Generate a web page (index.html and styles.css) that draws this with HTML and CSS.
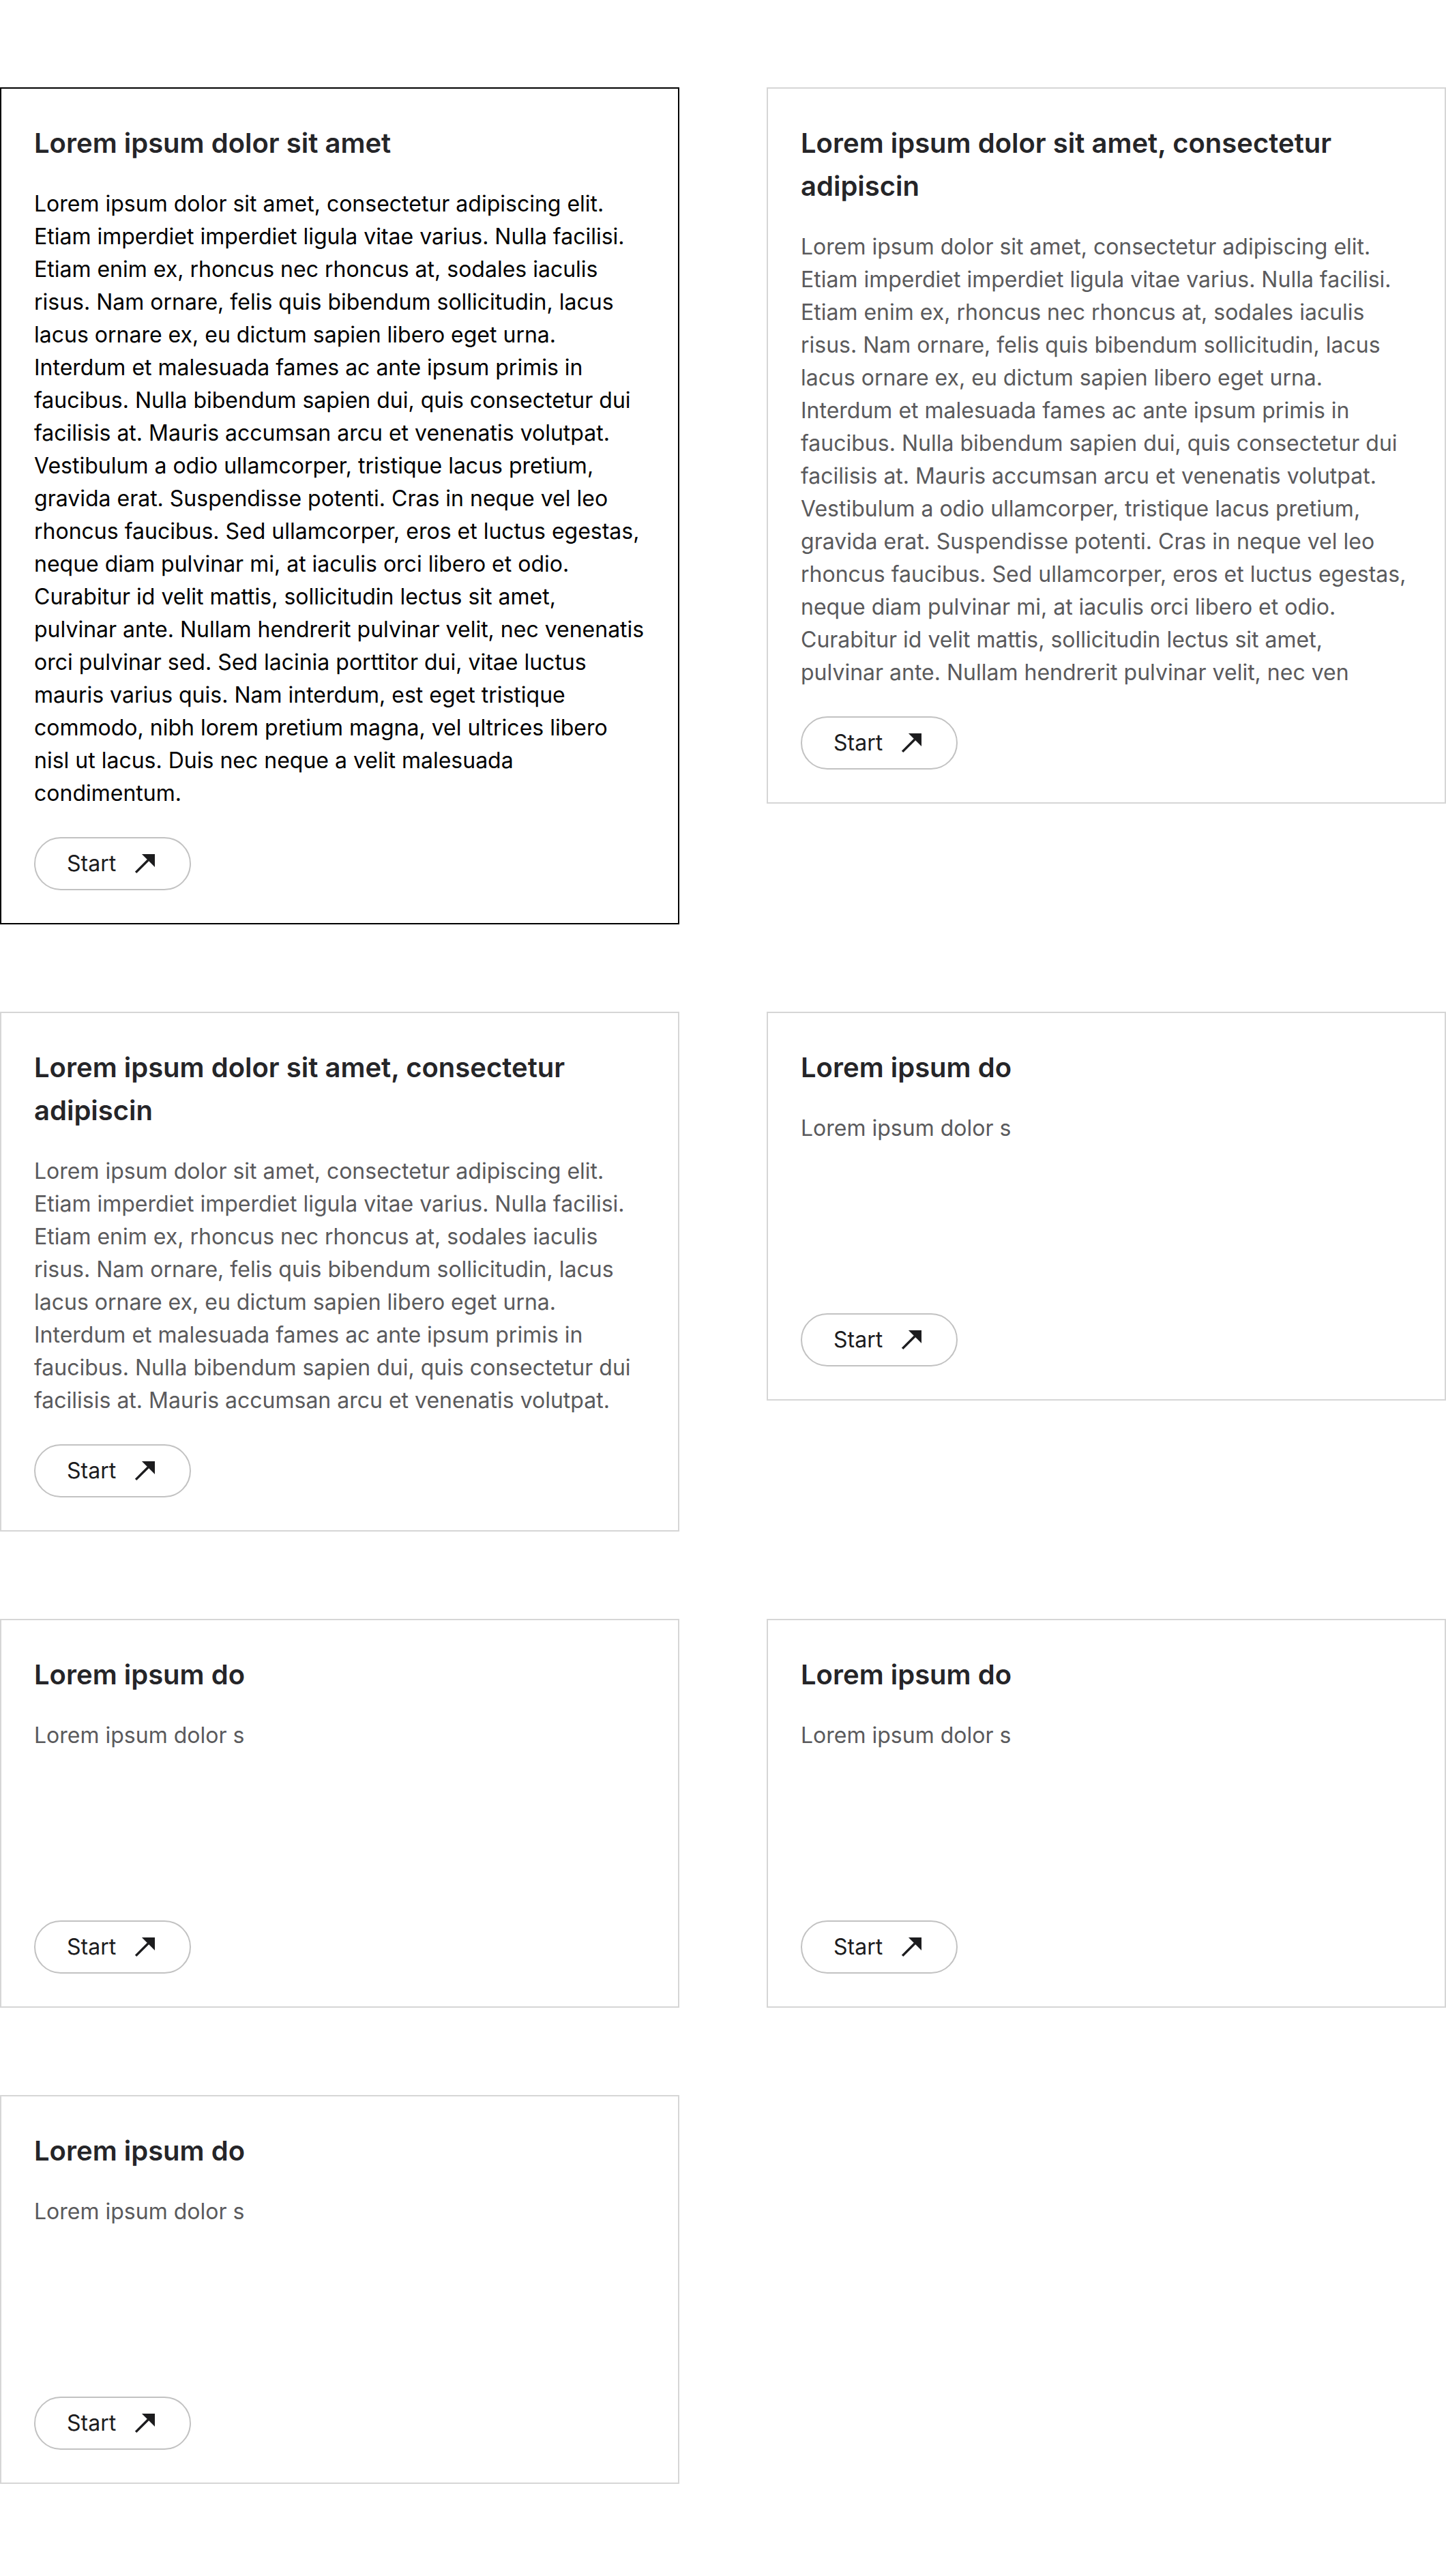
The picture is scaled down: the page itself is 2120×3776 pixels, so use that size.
FILE: index.html
```html
<!DOCTYPE html>
<html lang="en">
<head>
<meta charset="utf-8">
<title>Cards</title>
<link rel="stylesheet" href="styles.css">
</head>
<body>
<main class="grid">
  <article class="card card--active">
    <h2 class="card-title">Lorem ipsum dolor sit amet</h2>
    <p class="card-text">Lorem ipsum dolor sit amet, consectetur adipiscing elit. Etiam imperdiet imperdiet ligula vitae varius. Nulla facilisi. Etiam enim ex, rhoncus nec rhoncus at, sodales iaculis risus. Nam ornare, felis quis bibendum sollicitudin, lacus lacus ornare ex, eu dictum sapien libero eget urna. Interdum et malesuada fames ac ante ipsum primis in faucibus. Nulla bibendum sapien dui, quis consectetur dui facilisis at. Mauris accumsan arcu et venenatis volutpat. Vestibulum a odio ullamcorper, tristique lacus pretium, gravida erat. Suspendisse potenti. Cras in neque vel leo rhoncus faucibus. Sed ullamcorper, eros et luctus egestas, neque diam pulvinar mi, at iaculis orci libero et odio. Curabitur id velit mattis, sollicitudin lectus sit amet, pulvinar ante. Nullam hendrerit pulvinar velit, nec venenatis orci pulvinar sed. Sed lacinia porttitor dui, vitae luctus mauris varius quis. Nam interdum, est eget tristique commodo, nibh lorem pretium magna, vel ultrices libero nisl ut lacus. Duis nec neque a velit malesuada condimentum.</p>
    <a class="btn" href="#">Start <svg class="btn-icon" viewBox="0 0 24 24" aria-hidden="true"><line x1="3.4" y1="20.6" x2="15.5" y2="8.5"/><polygon points="9.3,2.7 22,2.7 22,15.4"/></svg></a>
  </article>
  <article class="card">
    <h2 class="card-title">Lorem ipsum dolor sit amet, consectetur adipiscin</h2>
    <p class="card-text">Lorem ipsum dolor sit amet, consectetur adipiscing elit. Etiam imperdiet imperdiet ligula vitae varius. Nulla facilisi. Etiam enim ex, rhoncus nec rhoncus at, sodales iaculis risus. Nam ornare, felis quis bibendum sollicitudin, lacus lacus ornare ex, eu dictum sapien libero eget urna. Interdum et malesuada fames ac ante ipsum primis in faucibus. Nulla bibendum sapien dui, quis consectetur dui facilisis at. Mauris accumsan arcu et venenatis volutpat. Vestibulum a odio ullamcorper, tristique lacus pretium, gravida erat. Suspendisse potenti. Cras in neque vel leo rhoncus faucibus. Sed ullamcorper, eros et luctus egestas, neque diam pulvinar mi, at iaculis orci libero et odio. Curabitur id velit mattis, sollicitudin lectus sit amet, pulvinar ante. Nullam hendrerit pulvinar velit, nec ven</p>
    <a class="btn" href="#">Start <svg class="btn-icon" viewBox="0 0 24 24" aria-hidden="true"><line x1="3.4" y1="20.6" x2="15.5" y2="8.5"/><polygon points="9.3,2.7 22,2.7 22,15.4"/></svg></a>
  </article>
  <article class="card">
    <h2 class="card-title">Lorem ipsum dolor sit amet, consectetur adipiscin</h2>
    <p class="card-text">Lorem ipsum dolor sit amet, consectetur adipiscing elit. Etiam imperdiet imperdiet ligula vitae varius. Nulla facilisi. Etiam enim ex, rhoncus nec rhoncus at, sodales iaculis risus. Nam ornare, felis quis bibendum sollicitudin, lacus lacus ornare ex, eu dictum sapien libero eget urna. Interdum et malesuada fames ac ante ipsum primis in faucibus. Nulla bibendum sapien dui, quis consectetur dui facilisis at. Mauris accumsan arcu et venenatis volutpat.</p>
    <a class="btn" href="#">Start <svg class="btn-icon" viewBox="0 0 24 24" aria-hidden="true"><line x1="3.4" y1="20.6" x2="15.5" y2="8.5"/><polygon points="9.3,2.7 22,2.7 22,15.4"/></svg></a>
  </article>
  <article class="card">
    <h2 class="card-title">Lorem ipsum do</h2>
    <p class="card-text">Lorem ipsum dolor s</p>
    <a class="btn" href="#">Start <svg class="btn-icon" viewBox="0 0 24 24" aria-hidden="true"><line x1="3.4" y1="20.6" x2="15.5" y2="8.5"/><polygon points="9.3,2.7 22,2.7 22,15.4"/></svg></a>
  </article>
  <article class="card">
    <h2 class="card-title">Lorem ipsum do</h2>
    <p class="card-text">Lorem ipsum dolor s</p>
    <a class="btn" href="#">Start <svg class="btn-icon" viewBox="0 0 24 24" aria-hidden="true"><line x1="3.4" y1="20.6" x2="15.5" y2="8.5"/><polygon points="9.3,2.7 22,2.7 22,15.4"/></svg></a>
  </article>
  <article class="card">
    <h2 class="card-title">Lorem ipsum do</h2>
    <p class="card-text">Lorem ipsum dolor s</p>
    <a class="btn" href="#">Start <svg class="btn-icon" viewBox="0 0 24 24" aria-hidden="true"><line x1="3.4" y1="20.6" x2="15.5" y2="8.5"/><polygon points="9.3,2.7 22,2.7 22,15.4"/></svg></a>
  </article>
  <article class="card">
    <h2 class="card-title">Lorem ipsum do</h2>
    <p class="card-text">Lorem ipsum dolor s</p>
    <a class="btn" href="#">Start <svg class="btn-icon" viewBox="0 0 24 24" aria-hidden="true"><line x1="3.4" y1="20.6" x2="15.5" y2="8.5"/><polygon points="9.3,2.7 22,2.7 22,15.4"/></svg></a>
  </article>
</main>
</body>
</html>
```

FILE: styles.css
```css
* {
  box-sizing: border-box;
}

html, body {
  margin: 0;
  padding: 0;
  background: #ffffff;
}

body {
  font-family: Inter, "Noto Sans", "Liberation Sans", sans-serif;
  color: #252528;
}

.grid {
  display: grid;
  grid-template-columns: 1fr 1fr;
  column-gap: 128px;
  row-gap: 128px;
  padding: 128px 0;
  align-items: start;
}

.card {
  display: flex;
  flex-direction: column;
  align-items: flex-start;
  min-height: 570px;
  padding: 48px 49.5px 48px 48px;
  border: 2px solid #d6d6d6;
  background: #ffffff;
}

.card--active {
  border-color: #000000;
}

.card-title {
  margin: 0 0 34px;
  font-size: 40px;
  line-height: 63px;
  font-weight: 600;
  color: #252528;
}

.card-text {
  margin: 0 0 40px;
  font-size: 32px;
  line-height: 48px;
  font-weight: 400;
  color: #5a5a5c;
}

.card--active .card-text {
  color: #000000;
}

.btn {
  display: inline-flex;
  align-items: center;
  gap: 24px;
  margin-top: auto;
  height: 78px;
  padding: 0 48px 0 46px;
  border: 2px solid #c2c2c2;
  border-radius: 999px;
  font-size: 32px;
  line-height: 1;
  color: #1c1c1e;
  text-decoration: none;
}

.btn-icon {
  width: 36px;
  height: 36px;
  flex: none;
}

.btn-icon line {
  stroke: #1c1c1e;
  stroke-width: 2.3;
  stroke-linecap: butt;
}

.btn-icon polygon {
  fill: #1c1c1e;
}
```
